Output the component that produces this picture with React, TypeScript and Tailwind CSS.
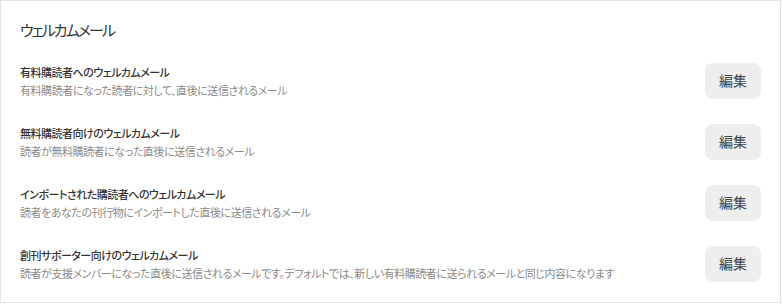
import React from 'react';

const rows = [
  { title: '有料購読者へのウェルカムメール', desc: '有料購読者になった読者に対して、直後に送信されるメール' },
  { title: '無料購読者向けのウェルカムメール', desc: '読者が無料購読者になった直後に送信されるメール' },
  { title: 'インポートされた購読者へのウェルカムメール', desc: '読者をあなたの刊行物にインポートした直後に送信されるメール' },
  {
    title: '創刊サポーター向けのウェルカムメール',
    desc: '読者が支援メンバーになった直後に送信されるメールです。デフォルトでは、新しい有料購読者に送られるメールと同じ内容になります',
  },
];

export default function App() {
  return (
    <div className="w-[782px] h-[304px] bg-white font-['Noto_Sans_CJK_JP',sans-serif] [font-feature-settings:'palt']">
      <div className="w-[781px] h-[303px] border border-[#e3e3e3] px-[19px] pt-[17px]">
        <h2 className="text-[15px] leading-6 tracking-[-1.9px] text-[#333]">ウェルカムメール</h2>
        <div className="mt-2">
          {rows.map(r => (
            <div key={r.title} className="h-[61px] flex items-center justify-between">
              <div>
                <div className="text-[11px] leading-[18px] tracking-[-0.5px] font-medium text-[#333]">{r.title}</div>
                <div className="text-[11px] leading-[18px] tracking-[-0.45px] text-[#8a8a8a]">{r.desc}</div>
              </div>
              <button className="w-14 h-9 rounded-lg bg-[#eeeeee] text-[14px] text-[#444]">編集</button>
            </div>
          ))}
        </div>
      </div>
    </div>
  );
}
